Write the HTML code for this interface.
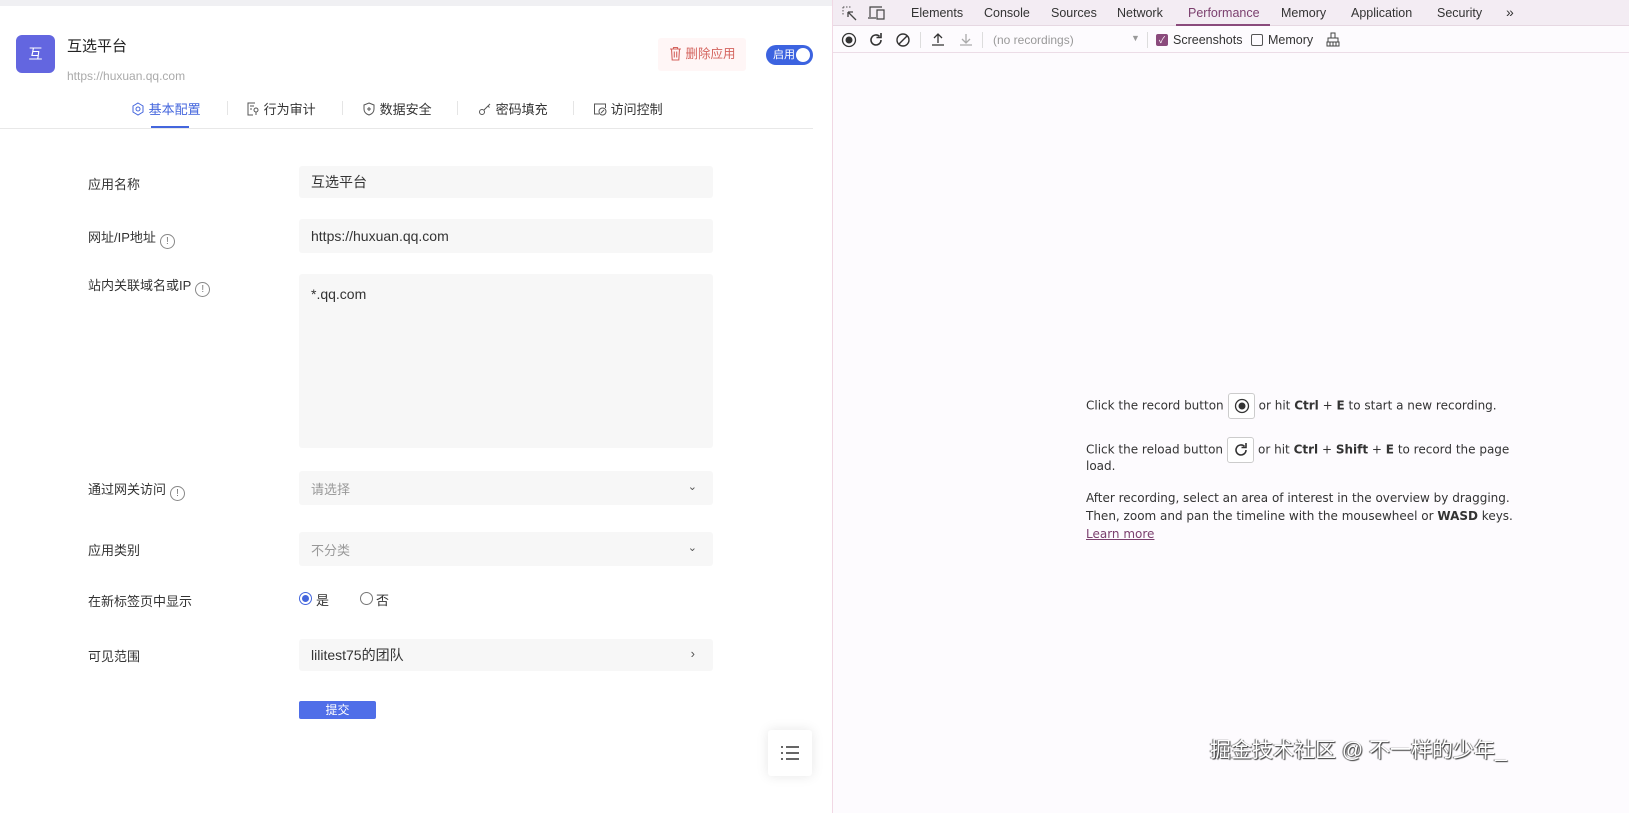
<!DOCTYPE html>
<html><head><meta charset="utf-8"><style>
*{box-sizing:border-box;margin:0;padding:0}
body{width:1629px;height:813px;overflow:hidden;background:#fff;font-family:"Liberation Sans","Noto Sans CJK SC",sans-serif;position:relative;color:#333}
.a{position:absolute}
.lbl{position:absolute;left:88px;font-size:13px;color:#333}
.inp{position:absolute;left:299px;width:414px;background:#f7f7f7;border-radius:3px;font-size:14px;color:#333;padding-left:12px;display:flex;align-items:center}
.info{display:inline-block;width:15px;height:15px;border:1px solid #888;border-radius:50%;font-size:10px;line-height:13px;text-align:center;color:#777;vertical-align:-2px;margin-left:4px}
.tab{position:absolute;top:99px;font-size:13px;color:#333}
.dt{position:absolute;top:6px;font-size:12.5px;color:#333}
.msg{position:absolute;left:1086px;font-size:12.5px;color:#333;font-family:"DejaVu Sans",sans-serif;font-size:12px}
.kb{display:inline-block;width:27px;height:26px;border:1px solid #ccc;border-radius:3px;vertical-align:middle;background:#fff;margin:0 4px;position:relative}
</style></head><body>
<div class="a" style="left:0;top:0;width:832px;height:6px;background:#f0f0f3"></div>
<div class="a" style="left:16px;top:35px;width:39px;height:38px;background:#6366e0;border-radius:6px;color:#fff;font-size:14px;text-align:center;line-height:38px">互</div>
<div class="a" style="left:67px;top:35px;font-size:15px;color:#222">互选平台</div>
<div class="a" style="left:67px;top:69px;font-size:12px;color:#aaa">https://huxuan.qq.com</div>
<div class="a" style="left:658px;top:38px;width:88px;height:33px;background:#fff6f6;border-radius:3px;color:#d4645e;font-size:12.5px;line-height:33px;padding-left:11px">
<svg width="13" height="15" viewBox="0 0 13 15" style="vertical-align:-3px"><path d="M1 3h11M4.5 3V1.5h4V3M2.5 3l.7 11h6.6l.7-11M5.3 5.5v6M7.7 5.5v6" fill="none" stroke="#d4645e" stroke-width="1.1"/></svg> 删除应用</div>
<div class="a" style="left:766px;top:45px;width:47px;height:20px;background:#3c63e0;border-radius:10px;color:#fff;font-size:11px;line-height:20px;padding-left:7px">启用<span class="a" style="right:3px;top:3px;width:14px;height:14px;background:#fff;border-radius:50%"></span></div>
<div class="tab" style="left:131px;color:#4466dd"><svg width="14" height="14" viewBox="0 0 14 14" style="vertical-align:-2px"><path d="M7 1l5 3v6l-5 3-5-3V4z" fill="none" stroke="#4466dd"/><circle cx="7" cy="7" r="2" fill="none" stroke="#4466dd"/></svg> 基本配置</div>
<div class="a" style="left:151px;top:126px;width:38px;height:2px;background:#4466dd"></div>
<div class="a" style="left:227px;top:101px;width:1px;height:14px;background:#e5e5e5"></div>
<div class="tab" style="left:246px"><svg width="14" height="14" viewBox="0 0 14 14" style="vertical-align:-2px"><path d="M9 1H2v12h5M4 4h4M4 7h2" fill="none" stroke="#555"/><circle cx="10" cy="8" r="2" fill="none" stroke="#555"/><path d="M10 10v3" stroke="#555"/></svg> 行为审计</div>
<div class="a" style="left:342px;top:101px;width:1px;height:14px;background:#e5e5e5"></div>
<div class="tab" style="left:362px"><svg width="14" height="14" viewBox="0 0 14 14" style="vertical-align:-2px"><path d="M7 1l5 2v4c0 3-2 5-5 6-3-1-5-3-5-6V3z M7 5v4M5 7h4" fill="none" stroke="#555"/></svg> 数据安全</div>
<div class="a" style="left:457px;top:101px;width:1px;height:14px;background:#e5e5e5"></div>
<div class="tab" style="left:478px"><svg width="14" height="14" viewBox="0 0 14 14" style="vertical-align:-2px"><circle cx="4" cy="10" r="2.5" fill="none" stroke="#555"/><path d="M6 8l6-6M10 4l1.5 1.5" fill="none" stroke="#555"/></svg> 密码填充</div>
<div class="a" style="left:573px;top:101px;width:1px;height:14px;background:#e5e5e5"></div>
<div class="tab" style="left:593px"><svg width="14" height="14" viewBox="0 0 14 14" style="vertical-align:-2px"><path d="M6 12H1.5V2h11v4" fill="none" stroke="#555"/><circle cx="9.5" cy="9.5" r="3.5" fill="none" stroke="#555"/><path d="M8 11l3-3" stroke="#555"/></svg> 访问控制</div>
<div class="a" style="left:0;top:128px;width:813px;height:1px;background:#e8e8e8"></div>

<div class="lbl" style="top:174px">应用名称</div>
<div class="inp" style="top:166px;height:32px">互选平台</div>
<div class="lbl" style="top:227px">网址/IP地址<span class="info">!</span></div>
<div class="inp" style="top:219px;height:34px">https://huxuan.qq.com</div>
<div class="lbl" style="top:275px">站内关联域名或IP<span class="info">!</span></div>
<div class="inp" style="top:274px;height:174px;align-items:flex-start;padding-top:12px">*.qq.com</div>
<div class="lbl" style="top:479px">通过网关访问<span class="info">!</span></div>
<div class="inp" style="top:471px;height:34px;color:#999;font-size:13px">请选择<span class="a" style="right:16px;top:9px;color:#555;font-size:11px">&#8964;</span></div>
<div class="lbl" style="top:540px">应用类别</div>
<div class="inp" style="top:532px;height:34px;color:#999;font-size:13px">不分类<span class="a" style="right:16px;top:9px;color:#555;font-size:11px">&#8964;</span></div>
<div class="lbl" style="top:591px">在新标签页中显示</div>
<div class="a" style="left:299px;top:592px;width:13px;height:13px;border:1px solid #4466dd;border-radius:50%"><span class="a" style="left:2px;top:2px;width:7px;height:7px;background:#4466dd;border-radius:50%"></span></div>
<div class="a" style="left:316px;top:590px;font-size:13px">是</div>
<div class="a" style="left:360px;top:592px;width:13px;height:13px;border:1px solid #777;border-radius:50%"></div>
<div class="a" style="left:376px;top:590px;font-size:13px">否</div>
<div class="lbl" style="top:646px">可见范围</div>
<div class="inp" style="top:639px;height:32px">lilitest75的团队<span class="a" style="right:18px;top:7px;color:#555;font-size:13px">›</span></div>
<div class="a" style="left:299px;top:701px;width:77px;height:18px;background:#4f6ee8;border-radius:2px;color:#fff;font-size:12px;text-align:center;line-height:18px">提交</div>
<div class="a" style="left:768px;top:730px;width:44px;height:46px;background:#fff;box-shadow:0 0 12px rgba(0,0,0,.1);border-radius:3px">
<svg width="20" height="16" viewBox="0 0 20 16" style="position:absolute;left:12px;top:15px"><path d="M1 2h2M6 2h13M1 8h2M6 8h13M1 14h2M6 14h13" stroke="#333" stroke-width="1.6"/></svg></div>

<div class="a" style="left:832px;top:0;width:797px;height:813px;background:#fdfbfe;border-left:1px solid #f1d8e4"></div>
<div class="a" style="left:833px;top:0;width:796px;height:26px;background:#f3ecf3;border-bottom:1px solid #e6d8e2"></div>
<svg class="a" style="left:842px;top:6px" width="16" height="15" viewBox="0 0 16 15"><path d="M1 1h8M1 1v8" fill="none" stroke="#555" stroke-dasharray="1.5 1.5"/><path d="M6 6l8 8M6 6v5M6 6h5" fill="none" stroke="#444" stroke-width="1.3"/></svg>
<svg class="a" style="left:868px;top:6px" width="17" height="14" viewBox="0 0 17 14"><path d="M2 11V1h12M0 12h8M9 4h7v9H9z" fill="none" stroke="#444" stroke-width="1.2"/></svg>
<div class="dt" style="left:911px">Elements</div>
<div class="dt" style="left:984px">Console</div>
<div class="dt" style="left:1051px">Sources</div>
<div class="dt" style="left:1117px">Network</div>
<div class="dt" style="left:1188px;color:#7b3f6e">Performance</div>
<div class="a" style="left:1176px;top:24px;width:94px;height:2px;background:#8a4a7c"></div>
<div class="dt" style="left:1281px">Memory</div>
<div class="dt" style="left:1351px">Application</div>
<div class="dt" style="left:1437px">Security</div>
<div class="dt" style="left:1506px;font-size:14px;top:4px">&raquo;</div>
<div class="a" style="left:833px;top:52px;width:796px;height:1px;background:#ecdde7"></div>
<svg class="a" style="left:841px;top:32px" width="16" height="16"><circle cx="8" cy="8" r="6.5" fill="none" stroke="#333" stroke-width="1.3"/><circle cx="8" cy="8" r="3.5" fill="#333"/></svg>
<svg class="a" style="left:868px;top:32px" width="16" height="16"><path d="M13 8a5 5 0 1 1-1.5-3.6" fill="none" stroke="#333" stroke-width="1.6"/><path d="M13 1v4.5H8.5" fill="none" stroke="#333" stroke-width="1.6"/></svg>
<svg class="a" style="left:895px;top:32px" width="16" height="16"><circle cx="8" cy="8" r="6" fill="none" stroke="#333" stroke-width="1.4"/><path d="M4 12l8-8" stroke="#333" stroke-width="1.4"/></svg>
<div class="a" style="left:920px;top:32px;width:1px;height:16px;background:#ddd"></div>
<svg class="a" style="left:931px;top:32px" width="14" height="15"><path d="M7 11V2M3 6l4-4 4 4M1 13h12" fill="none" stroke="#333" stroke-width="1.3"/></svg>
<svg class="a" style="left:959px;top:32px" width="14" height="15"><path d="M7 2v9M3 7l4 4 4-4M1 13h12" fill="none" stroke="#aaa" stroke-width="1.3"/></svg>
<div class="a" style="left:982px;top:32px;width:1px;height:16px;background:#ddd"></div>
<div class="a" style="left:993px;top:33px;font-size:12px;color:#999">(no recordings)</div>
<div class="a" style="left:1131px;top:33px;font-size:9px;color:#999">▼</div>
<div class="a" style="left:1147px;top:32px;width:1px;height:16px;background:#ddd"></div>
<div class="a" style="left:1156px;top:34px;width:12px;height:12px;background:#8a4a7c;border-radius:2px;color:#fff;font-size:9px;line-height:12px;text-align:center">✓</div>
<div class="a" style="left:1173px;top:33px;font-size:12.5px">Screenshots</div>
<div class="a" style="left:1251px;top:34px;width:12px;height:12px;border:1px solid #555;border-radius:2px"></div>
<div class="a" style="left:1268px;top:33px;font-size:12.5px">Memory</div>
<svg class="a" style="left:1326px;top:32px" width="14" height="15"><path d="M5 1h4v5H5zM2 6h10v4H2zM1 10h12v4H1zM4 10v4M7 10v4M10 10v4" fill="none" stroke="#444"/></svg>

<div class="msg" style="top:393px">Click the record button<span class="kb"><svg width="16" height="16" style="position:absolute;left:5px;top:4px"><circle cx="8" cy="8" r="6.5" fill="none" stroke="#333" stroke-width="1.3"/><circle cx="8" cy="8" r="3.5" fill="#333"/></svg></span>or hit <b>Ctrl</b> + <b>E</b> to start a new recording.</div>
<div class="msg" style="top:437px">Click the reload button<span class="kb"><svg width="16" height="16" style="position:absolute;left:5px;top:4px"><path d="M13 8a5 5 0 1 1-1.5-3.6" fill="none" stroke="#333" stroke-width="1.6"/><path d="M13 1v4.5H8.5" fill="none" stroke="#333" stroke-width="1.6"/></svg></span>or hit <b>Ctrl</b> + <b>Shift</b> + <b>E</b> to record the page</div>
<div class="msg" style="top:459px">load.</div>
<div class="msg" style="top:489px;line-height:18px">After recording, select an area of interest in the overview by dragging.<br>Then, zoom and pan the timeline with the mousewheel or <b>WASD</b> keys.<br><span style="color:#7b3f6e;text-decoration:underline">Learn more</span></div>

<div class="a" style="left:1210px;top:734px;font-size:21px;color:#fff;text-shadow:1px 1px 1px #333,-1px 0 1px #555;font-family:'Liberation Sans','Noto Sans CJK SC',sans-serif">掘金技术社区 @ 不一样的少年_</div>
</body></html>
